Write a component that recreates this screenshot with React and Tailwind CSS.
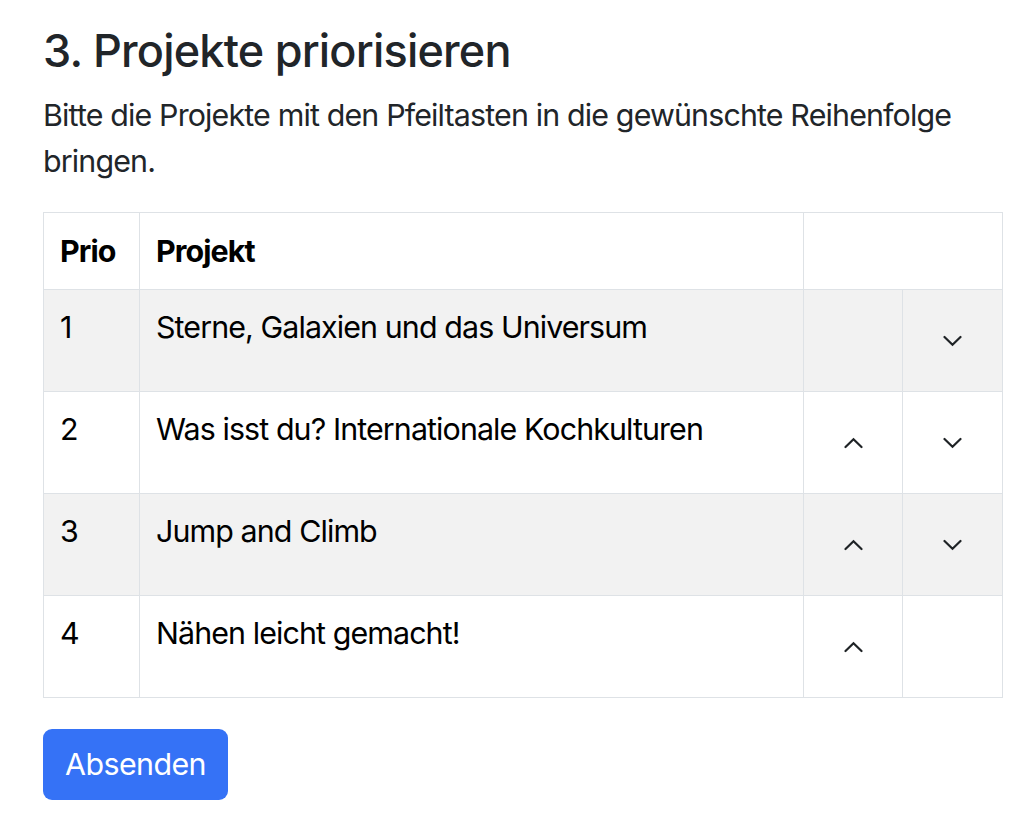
import React, { useState } from 'react';

const START = [
  'Sterne, Galaxien und das Universum',
  'Was isst du? Internationale Kochkulturen',
  'Jump and Climb',
  'Nähen leicht gemacht!',
];

function Chevron({ up }) {
  return (
    <svg width="19" height="12" viewBox="0 0 19 12" fill="none" className="block">
      <polyline
        points={up ? '1.5,10 9.5,2.2 17.5,10' : '1.5,2 9.5,9.8 17.5,2'}
        stroke="#1f2326"
        strokeWidth="2.2"
        strokeLinecap="round"
        strokeLinejoin="miter"
      />
    </svg>
  );
}

export default function App() {
  const [items, setItems] = useState(START);

  const move = (i, dir) => {
    const next = [...items];
    const j = i + dir;
    [next[i], next[j]] = [next[j], next[i]];
    setItems(next);
  };

  return (
    <div className="bg-white min-h-[827px] px-[43px] pt-[24px] text-[#212529]" style={{ fontFamily: 'Inter, "Noto Sans", sans-serif' }}>
      <h3 className="text-[45px] leading-[54px] font-medium tracking-[-0.8px] mb-[15px]">3. Projekte priorisieren</h3>
      <p className="text-[30.4px] leading-[45.6px] tracking-[-0.85px] mb-[28px] w-[960px]">
        Bitte die Projekte mit den Pfeiltasten in die gewünschte Reihenfolge bringen.
      </p>

      <table className="w-[960px] border-collapse text-black text-[30.4px] leading-[45.6px] tracking-[-0.9px] mb-[31px]">
        <thead>
          <tr className="h-[77px]">
            <th className="w-[96px] border border-[#dee2e6] px-[16px] pt-[16px] pb-[14px] text-left font-bold align-top">Prio</th>
            <th className="border border-[#dee2e6] px-[16px] pt-[16px] pb-[14px] text-left font-bold align-top">Projekt</th>
            <th colSpan={2} className="w-[199px] border border-[#dee2e6]"></th>
          </tr>
        </thead>
        <tbody>
          {items.map((name, i) => (
            <tr key={name} className={`h-[102px] ${i % 2 === 0 ? 'bg-[#f2f2f2]' : 'bg-white'}`}>
              <td className="border border-[#dee2e6] px-[16px] pt-[15px] align-top">{i + 1}</td>
              <td className="border border-[#dee2e6] px-[16px] pt-[15px] align-top">{name}</td>
              <td className="w-[99px] border border-[#dee2e6] align-middle">
                {i > 0 && (
                  <button onClick={() => move(i, -1)} className="w-full h-[71px] flex items-center justify-center">
                    <Chevron up />
                  </button>
                )}
              </td>
              <td className="w-[100px] border border-[#dee2e6] align-middle">
                {i < items.length - 1 && (
                  <button onClick={() => move(i, 1)} className="w-full h-[71px] flex items-center justify-center">
                    <Chevron />
                  </button>
                )}
              </td>
            </tr>
          ))}
        </tbody>
      </table>

      <button className="h-[71px] w-[185px] rounded-[9px] bg-[#3572f6] text-white text-[30.4px] leading-[45.6px] tracking-[-0.6px]">
        Absenden
      </button>
    </div>
  );
}
